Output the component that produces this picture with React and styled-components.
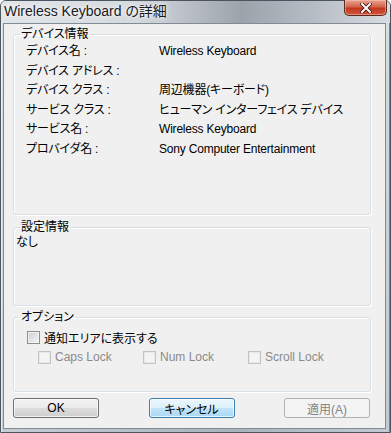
import React from "react";
import styled, { createGlobalStyle } from "styled-components";

const GlobalStyle = createGlobalStyle`
  html, body {
    margin: 0;
    padding: 0;
    background: #ffffff;
  }
  body {
    font-family: "Liberation Sans", "Noto Sans CJK JP", sans-serif;
    font-size: 12px;
    color: #000;
  }
`;

const Window = styled.div`
  width: 391px;
  height: 433px;
  box-sizing: border-box;
  display: flex;
  flex-direction: column;
  border: 1px solid #4a5560;
  border-radius: 6px 6px 0 0;
  padding: 0 4px 3px 2px;
  background:
    linear-gradient(90deg, rgba(255,255,255,0.25), rgba(120,130,140,0.15) 60%, rgba(255,255,255,0.2)),
    linear-gradient(180deg, #d3d8dd 0%, #c3cad1 30%, #b3bcc5 100%);
  box-shadow: inset 1px 1px 0 rgba(255,255,255,0.6), inset -1px 0 0 #5d88b3;
`;

const TitleBar = styled.div`
  height: 22px;
  display: flex;
  align-items: flex-start;
  justify-content: space-between;
  background: linear-gradient(90deg, #e2e5e9 0%, #d4d9de 35%, #9ca3aa 62%, #b5bcc3 80%, #d9dde1 100%);
  margin: 0 -4px 0 -2px;
  padding: 0 4px 0 3px;
  border-radius: 5px 5px 0 0;
`;

const Title = styled.div`
  font-family: "Liberation Sans", "Noto Sans CJK JP", sans-serif;
  font-size: 14px;
  line-height: 20px;
  color: #1a1a1a;
  text-shadow: 0 0 6px rgba(255,255,255,0.9), 0 0 3px rgba(255,255,255,0.9);
  font-feature-settings: "palt";
`;

const CloseButton = styled.div`
  width: 43px;
  height: 16px;
  margin-top: -1px;
  margin-right: -1px;
  box-sizing: border-box;
  border: 1px solid #5a2a20;
  border-top: none;
  border-radius: 0 0 5px 5px;
  background: linear-gradient(180deg, #e8a493 0%, #d4644c 45%, #c2371e 55%, #d0573b 100%);
  box-shadow: inset 0 0 0 1px rgba(255,200,190,0.5);
  display: flex;
  align-items: center;
  justify-content: center;
`;

const Client = styled.div`
  flex: 1;
  display: flex;
  flex-direction: column;
  background: #f0f0f0;
  border: 1px solid #7f8b96;
  padding: 1px 14px 0 9px;
`;

const Group = styled.fieldset`
  margin: ${(p) => p.$top}px 0 0 0;
  padding: 0;
  height: ${(p) => p.$height}px;
  box-sizing: border-box;
  border: 1px solid #d5dfe5;
  border-radius: 3px;
  box-shadow: inset 1px 1px 0 #ffffff, 1px 1px 0 #ffffff;
  min-width: 0;
`;

const Legend = styled.legend`
  margin-left: 6px;
  padding: 0 1px;
  line-height: 16px;
  font-size: 12px;
  font-feature-settings: "palt";
`;

const InfoGrid = styled.div`
  display: grid;
  grid-template-columns: 133px auto;
  padding-left: 12px;
  margin-top: 0;
`;

const Cell = styled.div`
  line-height: 19.5px;
  white-space: nowrap;
  letter-spacing: -0.2px;
  font-feature-settings: "palt";
`;

const Plain = styled.div`
  padding-left: 2px;
  line-height: 14px;
  font-feature-settings: "palt";
`;

const CheckRow = styled.div`
  display: flex;
  align-items: center;
  height: 20px;
  padding-left: ${(p) => p.$indent}px;
`;

const CheckItem = styled.label`
  display: flex;
  align-items: center;
  gap: 4px;
  width: ${(p) => (p.$width ? `${p.$width}px` : "auto")};
  color: ${(p) => (p.$disabled ? "#8a8a8a" : "#000")};
  font-feature-settings: "palt";
  white-space: nowrap;
`;

const Box = styled.span`
  width: 13px;
  height: 13px;
  box-sizing: border-box;
  border: 1px solid ${(p) => (p.$disabled ? "#c4c4c4" : "#8e8f8f")};
  background: ${(p) =>
    p.$disabled
      ? "#f4f4f4"
      : "linear-gradient(135deg, #cbcfd5 0%, #f6f6f6 100%)"};
  box-shadow: inset 0 0 0 1px ${(p) => (p.$disabled ? "#e8e8e8" : "#f4f4f4")};
`;

const ButtonRow = styled.div`
  display: flex;
  justify-content: space-between;
  margin-top: 6px;
  padding-right: 1px;
`;

const Button = styled.div`
  width: 86px;
  height: 20px;
  box-sizing: border-box;
  border-radius: 3px;
  display: flex;
  align-items: center;
  justify-content: center;
  font-size: 12px;
  font-feature-settings: "palt";
  border: 1px solid ${(p) =>
    p.$variant === "focus" ? "#3c7fb1" : p.$variant === "disabled" ? "#adb2b5" : "#707070"};
  color: ${(p) => (p.$variant === "disabled" ? "#838383" : "#000")};
  background: ${(p) =>
    p.$variant === "focus"
      ? "linear-gradient(180deg, #ecf6fc 0%, #dcf0fb 49%, #c2e4f8 50%, #a9d9f5 100%)"
      : p.$variant === "disabled"
      ? "#f4f4f4"
      : "linear-gradient(180deg, #f2f2f2 0%, #ebebeb 49%, #dddddd 50%, #cfcfcf 100%)"};
  box-shadow: inset 0 0 0 1px ${(p) =>
    p.$variant === "disabled" ? "#f4f4f4" : "rgba(255,255,255,0.7)"};
`;

const rows = [
  ["デバイス名 :", "Wireless Keyboard"],
  ["デバイス アドレス :", ""],
  ["デバイス クラス :", "周辺機器(キーボード)"],
  ["サービス クラス :", "ヒューマン インターフェイス デバイス"],
  ["サービス名 :", "Wireless Keyboard"],
  ["プロバイダ名 :", "Sony Computer Entertainment"],
];

export default function App() {
  return (
    <>
      <GlobalStyle />
      <Window>
        <TitleBar>
          <Title>Wireless Keyboard の詳細</Title>
          <CloseButton>
            <svg width="12" height="10" viewBox="0 0 12 10">
              <path d="M2 1 L10 9 M10 1 L2 9" stroke="#3a1410" strokeWidth="3.6" strokeLinecap="square" />
              <path d="M2 1 L10 9 M10 1 L2 9" stroke="#ffffff" strokeWidth="2" strokeLinecap="square" />
            </svg>
          </CloseButton>
        </TitleBar>
        <Client>
          <Group $top={1} $height={189}>
            <Legend>デバイス情報</Legend>
            <InfoGrid>
              {rows.map(([k, v]) => (
                <React.Fragment key={k}>
                  <Cell>{k}</Cell>
                  <Cell>{v}</Cell>
                </React.Fragment>
              ))}
            </InfoGrid>
          </Group>
          <Group $top={4} $height={87}>
            <Legend>設定情報</Legend>
            <Plain>なし</Plain>
          </Group>
          <Group $top={3} $height={83}>
            <Legend>オプション</Legend>
            <CheckRow $indent={13} style={{ marginTop: 2 }}>
              <CheckItem>
                <Box />
                通知エリアに表示する
              </CheckItem>
            </CheckRow>
            <CheckRow $indent={24}>
              <CheckItem $disabled $width={105}>
                <Box $disabled />
                Caps Lock
              </CheckItem>
              <CheckItem $disabled $width={105}>
                <Box $disabled />
                Num Lock
              </CheckItem>
              <CheckItem $disabled>
                <Box $disabled />
                Scroll Lock
              </CheckItem>
            </CheckRow>
          </Group>
          <ButtonRow>
            <Button>OK</Button>
            <Button $variant="focus">キャンセル</Button>
            <Button $variant="disabled">適用(A)</Button>
          </ButtonRow>
        </Client>
      </Window>
    </>
  );
}
